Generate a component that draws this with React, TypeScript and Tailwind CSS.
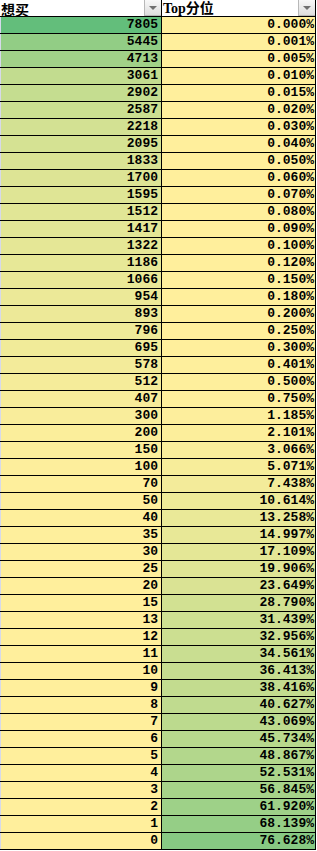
import React from "react";

const left = [7805,5445,4713,3061,2902,2587,2218,2095,1833,1700,1595,1512,1417,1322,1186,1066,954,893,796,695,578,512,407,300,200,150,100,70,50,40,35,30,25,20,15,13,12,11,10,9,8,7,6,5,4,3,2,1,0];
const right = ["0.000","0.001","0.005","0.010","0.015","0.020","0.030","0.040","0.050","0.060","0.070","0.080","0.090","0.100","0.120","0.150","0.180","0.200","0.250","0.300","0.401","0.500","0.750","1.185","2.101","3.066","5.071","7.438","10.614","13.258","14.997","17.109","19.906","23.649","28.790","31.439","32.956","34.561","36.413","38.416","40.627","43.069","45.734","48.867","52.531","56.845","61.920","68.139","76.628"];

function scale(t: number) {
  const r = Math.round(255 + (99 - 255) * t);
  const g = Math.round(239 + (190 - 239) * t);
  const b = Math.round(156 + (123 - 156) * t);
  return `rgb(${r},${g},${b})`;
}

function Drop() {
  return (
    <div className="w-[17px] h-[16px] shrink-0 border-l border-b border-[#b8b8b8] bg-gradient-to-b from-[#f8f8f8] to-[#dedede] flex items-center justify-center">
      <svg width="8" height="4" viewBox="0 0 8 4">
        <polygon points="0,0 8,0 4,4" fill="#707070" />
      </svg>
    </div>
  );
}

export default function App() {
  const lmax = 7805;
  const rmax = 100;
  return (
    <div className="w-[317px] bg-white text-black">
      <div className="flex h-[17px] border-b border-black w-[316px]">
        <div className="w-[162px] border-r border-black flex items-center justify-between">
          <span className="pl-px pt-px text-[14px] leading-none font-bold font-['Noto_Sans_CJK_SC',sans-serif]">想买</span>
          <Drop />
        </div>
        <div className="w-[154px] border-r border-black flex items-center justify-between">
          <span className="pl-px pt-px text-[14px] leading-none font-bold font-['Liberation_Serif','Noto_Sans_CJK_SC',serif]">Top分位</span>
          <Drop />
        </div>
      </div>
      {left.map((v, i) => (
        <div key={i} className="flex h-[17px] border-b border-black w-[316px] font-['Liberation_Mono',monospace] font-bold text-[13px] leading-[16px]">
          <div
            className="w-[162px] border-r border-l border-l-[#d6d9ea] border-r-black text-right pr-[3px]"
            style={{ background: scale(v / lmax) }}
          >
            {v}
          </div>
          <div
            className="w-[154px] border-r border-black text-right pr-[1px]"
            style={{ background: scale(parseFloat(right[i]) / rmax) }}
          >
            {right[i]}%
          </div>
        </div>
      ))}
    </div>
  );
}
